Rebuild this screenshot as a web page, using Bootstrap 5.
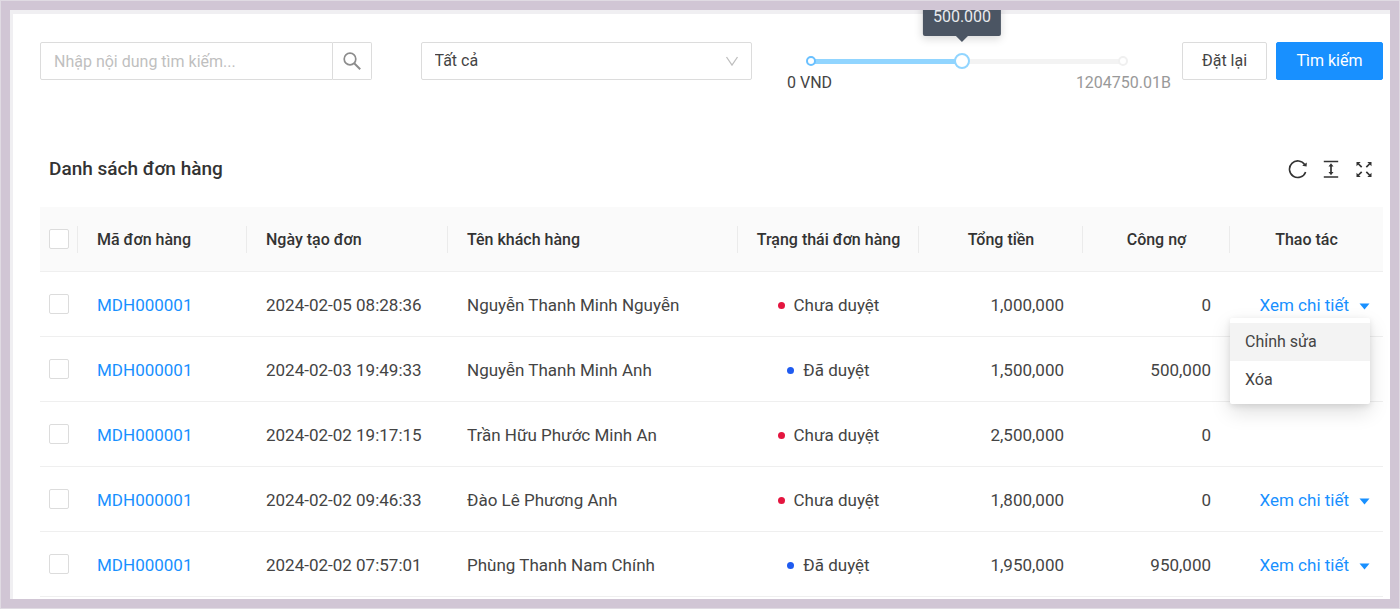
<!DOCTYPE html>
<html lang="vi">
<head>
<meta charset="utf-8">
<meta name="viewport" content="width=device-width, initial-scale=1">
<title>Danh sách đơn hàng</title>
<link href="https://cdn.jsdelivr.net/npm/bootstrap@5.3.0/dist/css/bootstrap.min.css" rel="stylesheet">
<style>
  :root { --ink: #444; --line: #dcdcdc; --hair: #efefef; --blue: #1890ff; }
  body { font: 400 16px/24px Roboto, "Liberation Sans", sans-serif; color: var(--ink); background: #fff; }
  .frame { min-height: 100vh; border: 10px solid #d1c6d5; outline: 1px solid #e0dbe3; outline-offset: -1px; box-shadow: inset 3px 4px 0 #f0eff2; overflow: hidden; padding: 32px 7px 2px 30px; }
  .filters { height: 38px; }
  .box { height: 38px; border: 1px solid var(--line); border-radius: 2px; font-size: 16px; color: var(--ink); box-shadow: none; }
  .form-control.box { padding: 6px 13px; }
  .form-control.box::placeholder { color: #bfbfbf; }
  .search-btn { width: 39px; background: #fff; padding: 0; }
  .form-select.box { padding: 6px 13px; background-size: 14px 14px; background-position: right 12px center;
    background-image: url("data:image/svg+xml,%3csvg xmlns='http://www.w3.org/2000/svg' viewBox='0 0 14 14'%3e%3cpath d='M1.5 3 7 11l5.500-8' fill='none' stroke='%23bfbfbf' stroke-width='1.300'/%3e%3c/svg%3e"); }
  .search-col { margin-right: 49px; }
  .select-col { margin-right: 35px; }
  .slider { width: 384px; margin-right: 11px; }
  .rail { margin: 9px 40px 0 16px; height: 20px; }
  .rail input { appearance: none; -webkit-appearance: none; width: 100%; height: 20px; margin: 0; display: block; background: transparent; position: relative; z-index: 1; }
  .rail input::-webkit-slider-runnable-track { height: 20px;
    background: linear-gradient(90deg, #91d5ff var(--at), #f3f3f3 var(--at)) center / calc(100% - 16px) 5px no-repeat; }
  .rail input::-webkit-slider-thumb { -webkit-appearance: none; width: 16px; height: 16px; margin-top: 2px; border-radius: 50%; background: #fff; border: 2px solid #91d5ff; }
  .stop { position: absolute; z-index: 2; top: 5px; width: 10px; height: 10px; border-radius: 50%; border: 2px solid #f0f0f0; background: #fff; }
  .stop-min { left: 3px; border-color: #69c0ff; }
  .stop-max { right: 3px; }
  .tip { position: absolute; bottom: 35px; left: calc(8px + (100% - 16px) * var(--pos)); transform: translateX(-50%); background: #4b5563; color: #e8eaed; border-radius: 2px; padding: 7px 10px; box-shadow: 0 3px 8px rgba(0,0,0,.15); }
  .tip::after { content: ""; position: absolute; top: 100%; left: 50%; margin-left: -6px; border: 6px solid transparent; border-top-color: #4b5563; border-bottom: 0; }
  .muted { color: #999; }
  .buttons { gap: 9px; }
  .reset { width: 85px; background: #fff; padding: 0; }
  .go { width: 107px; background: var(--blue); border-color: var(--blue); color: #fff; padding: 0; }
  .list-title { font-size: 19px; line-height: 24px; font-weight: 500; color: #333; }
  .list-head { margin: 77px 9px 26px; }
  .tools { gap: 13px; }
  .tool { border: 0; background: none; padding: 0; width: 20px; height: 20px; display: flex; color: #333; }
  .orders { table-layout: fixed; width: 100%; border-collapse: separate; border-spacing: 0; }
  .orders th, .orders td { height: 65px; padding: 2px 19px 0; border-bottom: 1px solid var(--hair); vertical-align: middle; white-space: nowrap; }
  .orders td { font-size: 17px; }
  .orders th { background: #fafafa; font-weight: 500; color: #333; position: relative; }
  .orders th:not(:last-child)::after { content: ""; position: absolute; right: 0; top: 19px; height: 27px; width: 1px; background: #ebebeb; }
  .orders .pick { padding: 0 0 0 9px; }
  .orders .tight { padding: 2px 0 0; }
  .orders .act { padding: 2px 13px 0 0; }
  .form-check-input.tick { width: 20px; height: 20px; margin: 0; display: block; float: none; border: 1px solid var(--line); border-radius: 2px; }
  .orders a, .more { color: var(--blue); text-decoration: none; }
  .act-in { gap: 10px; }
  .more { border: 0; background: none; padding: 3px 0 0; width: 11px; height: 20px; display: flex; align-items: center; }
  .state { gap: 9px; }
  .dot { width: 7px; height: 7px; border-radius: 50%; }
  .dot-wait { background: #e4153f; }
  .dot-done { background: #1f5bf0; }
  .dropdown-menu.ops { top: 100%; right: 0; margin-top: 1px; width: 140px; min-width: 0; padding: 5px 0; border: 0; border-radius: 2px; font-size: 16px; box-shadow: 0 8px 20px rgba(0,0,0,.13), 0 2px 6px rgba(0,0,0,.1); }
  .ops .dropdown-item { padding: 7px 15px; color: var(--ink); }
  .ops .dropdown-item.hot { background: #f3f3f3; }
</style>
</head>
<body>
<main class="frame">
  <form class="filters d-flex align-items-start">
    <div class="search-col flex-fill d-flex w-25">
      <input class="form-control box rounded-end-0" type="text" placeholder="Nhập nội dung tìm kiếm..." aria-label="Nhập nội dung tìm kiếm">
      <button class="box search-btn border-start-0 rounded-start-0 d-flex align-items-center justify-content-center flex-shrink-0" type="button" aria-label="Tìm">
        <svg width="20" height="20" viewBox="0 0 20 20" fill="none" stroke="#8c8c8c" stroke-width="1.700"><circle cx="8" cy="8" r="5.800"/><path d="m12.200 12.200 6 6" stroke-width="2"/></svg>
      </button>
    </div>
    <div class="select-col flex-fill w-25">
      <select class="form-select box" aria-label="Trạng thái"><option>Tất cả</option></select>
    </div>
    <div class="slider flex-shrink-0" style="--pos:.484; --at:48.4%">
      <div class="rail position-relative">
        <input type="range" min="0" max="1000" value="484" aria-label="Tổng tiền">
        <span class="stop stop-min"></span><span class="stop stop-max"></span>
        <div class="tip">500.000</div>
      </div>
      <div class="d-flex justify-content-between"><span>0 VND</span><span class="muted">1204750.01B</span></div>
    </div>
    <div class="buttons d-flex flex-shrink-0">
      <button class="box reset" type="reset">Đặt lại</button>
      <button class="box go" type="submit">Tìm kiếm</button>
    </div>
  </form>

  <div class="list-head d-flex justify-content-between align-items-center">
    <h1 class="list-title m-0">Danh sách đơn hàng</h1>
    <div class="d-flex tools">
      <button class="tool" type="button" aria-label="Tải lại"><svg width="20" height="20" viewBox="0 0 20 20" fill="none" stroke="currentColor" stroke-width="1.600"><path d="M17.600 13A8.300 8.300 0 1 1 16.800 5.800"/><path d="m18.800 3.600-.2 4-4.400-.9z" fill="currentColor" stroke="none"/></svg></button>
      <button class="tool" type="button" aria-label="Mật độ"><svg width="20" height="20" viewBox="0 0 20 20" fill="none" stroke="currentColor" stroke-width="1.700"><path d="M2.800 2.500h14.400M2.800 18h14.400M10 6v8.500"/><path d="m10 4.200 2.500 3.300h-5zM10 16.300l2.500-3.300h-5z" fill="currentColor" stroke="none"/></svg></button>
      <button class="tool" type="button" aria-label="Toàn màn hình"><svg width="20" height="20" viewBox="0 0 20 20" fill="none" stroke="currentColor" stroke-width="1.700"><path d="m4 4.500 3.700 3.700M16 4.500l-3.700 3.700M4 16.500l3.700-3.700M16 16.500l-3.700-3.700"/><path d="M2.500 3h4.200L2.500 7.200zM17.500 3h-4.200l4.200 4.200zM2.500 18h4.200l-4.200-4.200zM17.500 18h-4.200l4.200-4.200z" fill="currentColor" stroke="none"/></svg></button>
    </div>
  </div>

  <table class="orders">
    <colgroup><col style="width:38px"><col style="width:169px"><col style="width:201px"><col><col style="width:181px"><col style="width:164px"><col style="width:147px"><col style="width:153px"></colgroup>
    <thead>
      <tr>
        <th class="pick"><input class="form-check-input tick" type="checkbox" aria-label="Chọn tất cả"></th>
        <th>Mã đơn hàng</th><th>Ngày tạo đơn</th><th>Tên khách hàng</th>
        <th class="text-center tight">Trạng thái đơn hàng</th><th class="text-center">Tổng tiền</th><th class="text-center">Công nợ</th><th class="text-center">Thao tác</th>
      </tr>
    </thead>
    <tbody id="rows"></tbody>
  </table>
</main>
<script>
  const orders = [
    ["2024-02-05 08:28:36", "Nguyễn Thanh Minh Nguyễn", 0, "1,000,000", "0", "menu"],
    ["2024-02-03 19:49:33", "Nguyễn Thanh Minh Anh", 1, "1,500,000", "500,000", ""],
    ["2024-02-02 19:17:15", "Trần Hữu Phước Minh An", 0, "2,500,000", "0", ""],
    ["2024-02-02 09:46:33", "Đào Lê Phương Anh", 0, "1,800,000", "0", "link"],
    ["2024-02-02 07:57:01", "Phùng Thanh Nam Chính", 1, "1,950,000", "950,000", "link"]
  ];
  const menu = `<div class="dropdown-menu ops show"><a class="dropdown-item hot" href="#">Chỉnh sửa</a><a class="dropdown-item" href="#">Xóa</a></div>`;
  const action = kind => kind ? `<div class="d-flex justify-content-end align-items-center position-relative act-in"><a href="#">Xem chi tiết</a><button class="more" type="button" aria-label="Thêm thao tác"><svg width="11" height="7" viewBox="0 0 11 7" fill="currentColor"><path d="M.5.500h10L5.500 6.500z"/></svg></button>${kind === "menu" ? menu : ""}</div>` : "";
  document.getElementById("rows").innerHTML = orders.map(([date, name, done, total, debt, kind]) => `
    <tr>
      <td class="pick"><input class="form-check-input tick" type="checkbox" aria-label="Chọn ${name}"></td>
      <td><a href="#">MDH000001</a></td><td>${date}</td><td>${name}</td>
      <td class="tight"><div class="state d-flex justify-content-center align-items-center"><span class="dot ${done ? "dot-done" : "dot-wait"}"></span>${done ? "Đã duyệt" : "Chưa duyệt"}</div></td>
      <td class="text-end">${total}</td><td class="text-end">${debt}</td><td class="act">${action(kind)}</td>
    </tr>`).join("");
</script>
<script src="https://cdn.jsdelivr.net/npm/bootstrap@5.3.0/dist/js/bootstrap.bundle.min.js"></script>
</body>
</html>
